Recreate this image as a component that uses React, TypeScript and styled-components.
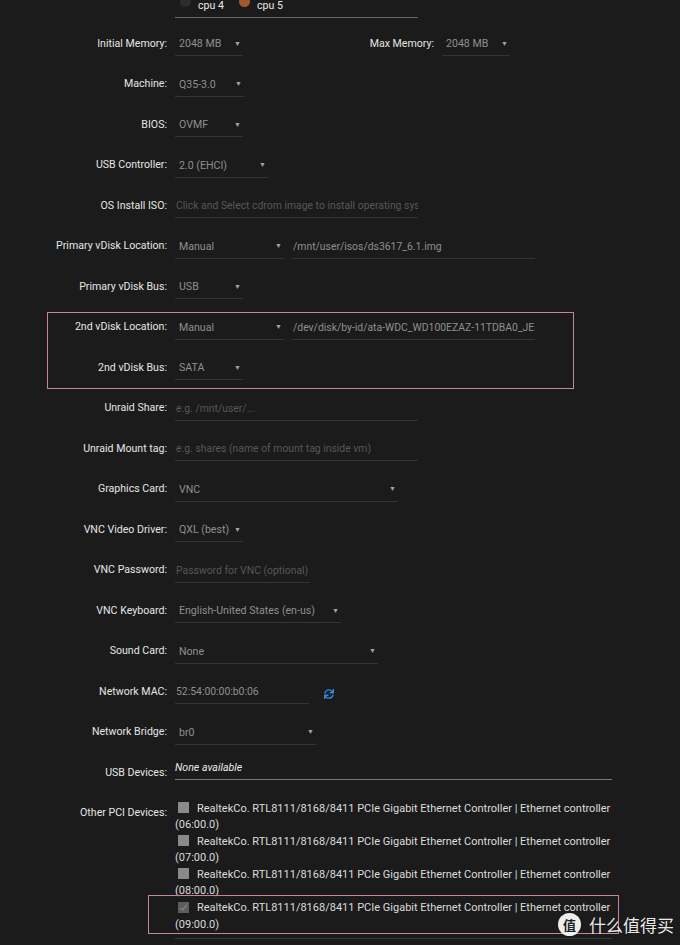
import styled, { createGlobalStyle } from 'styled-components'
import { FaSync } from 'react-icons/fa'

const GlobalStyle = createGlobalStyle`
  html, body {
    margin: 0;
    padding: 0;
    background: #1b1b1b;
  }
  body {
    font-family: Roboto, "Liberation Sans", sans-serif;
  }
`

const Page = styled.div`
  position: relative;
  width: 680px;
  height: 945px;
  overflow: hidden;
  background: #1b1b1b;
  color: #e4e4e4;
  font-size: 10.6px;
`

const CpuBar = styled.div`
  margin-left: 175px;
  width: 243px;
  height: 18px;
  box-sizing: border-box;
  padding-left: 5px;
  display: flex;
  gap: 15px;
  border-bottom: 1px solid #666;
`

const Cpu = styled.div`
  display: flex;
  align-items: flex-start;
  gap: 7px;
  line-height: 12px;
  color: #e8e8e8;
`

const CpuDot = styled.span<{ $color: string }>`
  flex: none;
  width: 11px;
  height: 11px;
  margin-top: -4px;
  border-radius: 50%;
  background: ${(p) => p.$color};
`

const Form = styled.div`
  margin-top: 6px;
`

const Row = styled.div<{ $top?: boolean }>`
  display: flex;
  align-items: ${(p) => (p.$top ? 'flex-start' : 'center')};
  gap: 8px;
  height: ${(p) => (p.$top ? 'auto' : '40.5px')};
`

const Label = styled.div<{ $w?: number; $pad?: number }>`
  flex: none;
  width: ${(p) => p.$w ?? 167}px;
  padding-top: ${(p) => p.$pad ?? 0}px;
  line-height: 16.6px;
  text-align: right;
  white-space: nowrap;
  color: #e6e6e6;
`

const SelectBox = styled.div<{ $w: number }>`
  flex: none;
  width: ${(p) => p.$w}px;
  height: 24px;
  box-sizing: border-box;
  padding: 0 2px 0 4px;
  display: flex;
  align-items: center;
  justify-content: space-between;
  border-bottom: 1px solid #343434;
  color: #8f8f8f;
  white-space: nowrap;
`

const Arrow = styled.span`
  font-size: 7px;
  color: #a3a3a3;
`

const TextInput = styled.input<{ $w: number }>`
  flex: none;
  width: ${(p) => p.$w}px;
  height: 24px;
  box-sizing: border-box;
  padding: 0 0 0 1px;
  margin: 0;
  background: transparent;
  border: none;
  border-bottom: 1px solid #343434;
  outline: none;
  color: #8f8f8f;
  font: inherit;
  font-size: 10.4px;

  &::placeholder {
    color: #575757;
  }
`

const RefreshIcon = styled(FaSync)`
  margin-left: 7px;
  margin-top: 3px;
  color: #2b8de8;
`

const Highlight = styled.div`
  position: relative;

  &::after {
    content: '';
    position: absolute;
    top: 4.5px;
    bottom: 0;
    left: 47px;
    width: 527px;
    box-sizing: border-box;
    border: 1.5px solid #c4859d;
    pointer-events: none;
  }
`

const UsbValue = styled.div`
  width: 437px;
  line-height: 14px;
  padding-bottom: 4px;
  margin-bottom: 5px;
  border-bottom: 1px solid #7a7a7a;
  font-style: italic;
  color: #e8e8e8;
`

const DeviceList = styled.div`
  width: 437px;
  padding-top: 7px;
  padding-bottom: 5px;
  border-bottom: 1px solid #3a3a3a;
  font-size: 11px;
  line-height: 16.6px;
  color: #dcdcdc;
  white-space: nowrap;
`

const Device = styled.div<{ $highlight?: boolean }>`
  position: relative;

  &::after {
    content: '';
    display: ${(p) => (p.$highlight ? 'block' : 'none')};
    position: absolute;
    top: -5px;
    bottom: -1px;
    left: -27px;
    width: 471px;
    box-sizing: border-box;
    border: 1.5px solid #c4859d;
    pointer-events: none;
  }
`

const Check = styled.span<{ $checked?: boolean }>`
  display: inline-flex;
  align-items: center;
  justify-content: center;
  width: 11px;
  height: 11px;
  margin: 0 8px 0 3px;
  vertical-align: -1px;
  background: ${(p) => (p.$checked ? '#5d5d5d' : '#8a8a8a')};
`

const Watermark = styled.div`
  position: absolute;
  right: 6px;
  bottom: 9px;
  display: flex;
  align-items: center;
  gap: 8px;
  color: rgba(255, 255, 255, 0.92);
  font-family: "Noto Sans CJK SC", sans-serif;
  font-size: 17px;
  line-height: 20px;
`

const WatermarkLogo = styled.span`
  width: 23px;
  height: 23px;
  border-radius: 50%;
  background: rgba(255, 255, 255, 0.92);
  color: #1b1b1b;
  font-size: 13px;
  font-weight: 700;
  display: flex;
  align-items: center;
  justify-content: center;
`

const Select = ({ w, value }: { w: number; value: string }) => (
  <SelectBox $w={w}>
    <span>{value}</span>
    <Arrow>▼</Arrow>
  </SelectBox>
)

const deviceName =
  'RealtekCo. RTL8111/8168/8411 PCIe Gigabit Ethernet Controller | Ethernet controller'

const devices = [
  { addr: '06:00.0', checked: false },
  { addr: '07:00.0', checked: false },
  { addr: '08:00.0', checked: false },
  { addr: '09:00.0', checked: true },
]

const App = () => {
  return (
    <Page>
      <GlobalStyle />
      <CpuBar>
        <Cpu>
          <CpuDot $color="#2c2c2c" />
          cpu 4
        </Cpu>
        <Cpu>
          <CpuDot $color="#a0592a" />
          cpu 5
        </Cpu>
      </CpuBar>

      <Form>
        <Row>
          <Label>Initial Memory:</Label>
          <Select w={68} value="2048 MB" />
          <Label $w={183}>Max Memory:</Label>
          <Select w={68} value="2048 MB" />
        </Row>
        <Row>
          <Label>Machine:</Label>
          <Select w={69} value="Q35-3.0" />
        </Row>
        <Row>
          <Label>BIOS:</Label>
          <Select w={68} value="OVMF" />
        </Row>
        <Row>
          <Label>USB Controller:</Label>
          <Select w={93} value="2.0 (EHCI)" />
        </Row>
        <Row>
          <Label>OS Install ISO:</Label>
          <TextInput
            $w={243}
            readOnly
            placeholder="Click and Select cdrom image to install operating system"
          />
        </Row>
        <Row>
          <Label>Primary vDisk Location:</Label>
          <Select w={109} value="Manual" />
          <TextInput $w={243} readOnly defaultValue="/mnt/user/isos/ds3617_6.1.img" />
        </Row>
        <Row>
          <Label>Primary vDisk Bus:</Label>
          <Select w={68} value="USB" />
        </Row>

        <Highlight>
          <Row>
            <Label>2nd vDisk Location:</Label>
            <Select w={109} value="Manual" />
            <TextInput
              $w={243}
              readOnly
              defaultValue="/dev/disk/by-id/ata-WDC_WD100EZAZ-11TDBA0_JEK3LPHN"
            />
          </Row>
          <Row>
            <Label>2nd vDisk Bus:</Label>
            <Select w={68} value="SATA" />
          </Row>
        </Highlight>

        <Row>
          <Label>Unraid Share:</Label>
          <TextInput $w={243} readOnly placeholder="e.g. /mnt/user/..." />
        </Row>
        <Row>
          <Label>Unraid Mount tag:</Label>
          <TextInput
            $w={243}
            readOnly
            placeholder="e.g. shares (name of mount tag inside vm)"
          />
        </Row>
        <Row>
          <Label>Graphics Card:</Label>
          <Select w={223} value="VNC" />
        </Row>
        <Row>
          <Label>VNC Video Driver:</Label>
          <Select w={68} value="QXL (best)" />
        </Row>
        <Row>
          <Label>VNC Password:</Label>
          <TextInput $w={135} readOnly placeholder="Password for VNC (optional)" />
        </Row>
        <Row>
          <Label>VNC Keyboard:</Label>
          <Select w={166} value="English-United States (en-us)" />
        </Row>
        <Row>
          <Label>Sound Card:</Label>
          <Select w={203} value="None" />
        </Row>
        <Row>
          <Label>Network MAC:</Label>
          <TextInput $w={134} readOnly defaultValue="52:54:00:00:b0:06" />
          <RefreshIcon size={10} />
        </Row>
        <Row>
          <Label>Network Bridge:</Label>
          <Select w={141} value="br0" />
        </Row>
        <Row>
          <Label>USB Devices:</Label>
          <UsbValue>None available</UsbValue>
        </Row>
        <Row $top>
          <Label $pad={11.7}>Other PCI Devices:</Label>
          <DeviceList>
            {devices.map((d) => (
              <Device key={d.addr} $highlight={d.checked}>
                <Check $checked={d.checked}>
                  {d.checked && (
                    <svg width="9" height="9" viewBox="0 0 9 9">
                      <path
                        d="M1.5 4.8 L3.6 6.9 L7.6 2"
                        fill="none"
                        stroke="#858585"
                        strokeWidth="1.2"
                      />
                    </svg>
                  )}
                </Check>
                {deviceName}
                <br />({d.addr})
              </Device>
            ))}
          </DeviceList>
        </Row>
      </Form>

      <Watermark>
        <WatermarkLogo>值</WatermarkLogo>
        什么值得买
      </Watermark>
    </Page>
  )
}

export default App
